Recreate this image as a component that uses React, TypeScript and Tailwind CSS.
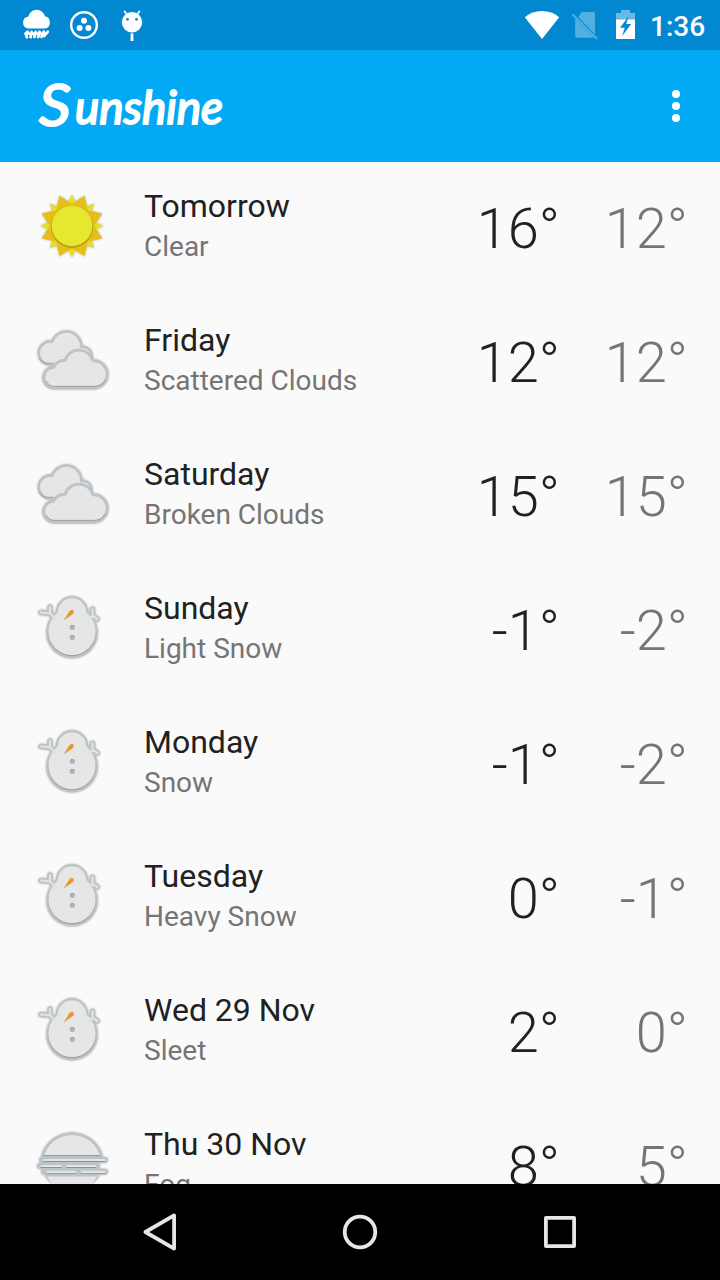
import type { ReactNode } from "react";

type Kind = "clear" | "clouds" | "snow" | "fog";

interface Day {
  name: string;
  summary: string;
  high: number;
  low: number;
  kind: Kind;
}

const days: Day[] = [
  { name: "Tomorrow", summary: "Clear", high: 16, low: 12, kind: "clear" },
  { name: "Friday", summary: "Scattered Clouds", high: 12, low: 12, kind: "clouds" },
  { name: "Saturday", summary: "Broken Clouds", high: 15, low: 15, kind: "clouds" },
  { name: "Sunday", summary: "Light Snow", high: -1, low: -2, kind: "snow" },
  { name: "Monday", summary: "Snow", high: -1, low: -2, kind: "snow" },
  { name: "Tuesday", summary: "Heavy Snow", high: 0, low: -1, kind: "snow" },
  { name: "Wed 29 Nov", summary: "Sleet", high: 2, low: 0, kind: "snow" },
  { name: "Thu 30 Nov", summary: "Fog", high: 8, low: 5, kind: "fog" },
];

const OUTLINE = "#bcc4c8";
const PAPER = "#e6e6e6";

function star(points: number, outer: number, inner: number, offset: number) {
  const out: string[] = [];
  for (let i = 0; i < points * 2; i++) {
    const r = i % 2 === 0 ? outer : inner;
    const a = ((offset + (i * 180) / points) * Math.PI) / 180;
    out.push(`${(36 + r * Math.cos(a)).toFixed(2)},${(36 + r * Math.sin(a)).toFixed(2)}`);
  }
  return out.join(" ");
}

function IconFrame({ children }: { children: ReactNode }) {
  return (
    <svg
      className="h-[72px] w-[72px] shrink-0 overflow-visible drop-shadow-[0_0.5px_0.8px_rgba(0,0,0,0.28)]"
      viewBox="0 0 72 72"
      fill="none"
      strokeLinecap="round"
      strokeLinejoin="round"
    >
      {children}
    </svg>
  );
}

function SunIcon() {
  return (
    <IconFrame>
      <polygon points={star(8, 31.5, 18.5, 0)} fill="#e3e02c" />
      <polygon points={star(8, 32.8, 22.4, 22.5)} fill="#e6bf1b" />
      <circle cx="36" cy="36.8" r="20.9" fill="#a98a12" />
      <circle cx="36" cy="35.8" r="20.9" fill="#c9b41d" />
      <circle cx="36" cy="35.8" r="20.2" fill="#e6e72f" />
    </IconFrame>
  );
}

function CloudsIcon() {
  const back =
    "M12.5 40.5 A11 11 0 1 1 16.3 17.6 A14.9 14.9 0 0 1 45.3 23 A8.6 8.6 0 0 1 55.5 32 L50 41 Z";
  const front =
    "M18.5 64 H58.2 A13.6 13.6 0 0 0 57 36.8 A14.6 14.6 0 0 0 29 36.3 A12.5 12.5 0 0 0 17.6 43.2 A10.4 10.4 0 0 0 18.5 64 Z";
  return (
    <IconFrame>
      <path d={back} fill={PAPER} stroke={OUTLINE} strokeWidth="2.6" />
      <path d="M3.2 34.5 A10 10 0 0 0 13 39.3 H17" stroke="#969b9e" strokeWidth="0.9" />
      <path d={front} fill={PAPER} stroke={OUTLINE} strokeWidth="3" />
      <path d="M10.4 57.5 Q13 62.4 18.5 62.4 H58 Q66 62.2 69.3 56" stroke="#96999b" strokeWidth="0.9" />
    </IconFrame>
  );
}

function SnowIcon() {
  const arms = "M4.9 20.5 L14 21.3 L20.5 28 M14 21 V15 M51.8 28.4 L56.5 23.6 V17.3 M56.5 23.6 L61.3 27";
  return (
    <IconFrame>
      <path d={arms} stroke={OUTLINE} strokeWidth="5.6" />
      <circle cx="36" cy="20.5" r="16.4" fill={OUTLINE} />
      <circle cx="36" cy="40.5" r="26" fill={OUTLINE} />
      <circle cx="36" cy="40.3" r="23.9" fill="#96999b" />
      <circle cx="36" cy="20.5" r="14.2" fill={PAPER} />
      <circle cx="36" cy="39.5" r="23.7" fill={PAPER} />
      <path d={arms} stroke="#e0e2e3" strokeWidth="2.2" />
      <path d="M27.6 28.6 L33.4 19.2 Q35.3 16.8 37.2 18.2 Q38.6 20 37 22 Z" fill="#e9982b" />
      <circle cx="36.3" cy="35.5" r="2.5" fill="#aeb5b9" />
      <circle cx="36.3" cy="45.5" r="2.5" fill="#aeb5b9" />
      <path
        d="M34.3 34.3 A2.5 2.5 0 0 1 38.3 34.3 M34.3 44.3 A2.5 2.5 0 0 1 38.3 44.3"
        stroke="#878d91"
        strokeWidth="0.7"
      />
    </IconFrame>
  );
}

function FogIcon() {
  const bars = "M7.2 32 H69 M4.5 38 H25.5 M30.5 38 H60 M10.5 43.8 H40 M44.8 43.8 H69";
  return (
    <IconFrame>
      <path d="M6.4 28.4 A30.6 30.6 0 0 1 65.6 28.4 Z" fill={PAPER} stroke={OUTLINE} strokeWidth="2.8" />
      <path d="M11 49 H61 A31 31 0 0 1 11 49 Z" fill={PAPER} stroke={OUTLINE} strokeWidth="2.6" />
      <path d="M6 32 H69 M4 38 H61 M8 43.8 H69 M12 47 H60" stroke={OUTLINE} strokeWidth="6" />
      <path d="M8 27.7 H64" stroke="#8f9294" strokeWidth="0.9" />
      <g transform="translate(0 0.9)">
        <path d={bars} stroke="#8f9294" strokeWidth="2.2" strokeLinecap="butt" />
      </g>
      <path d={bars} stroke="#e3e4e5" strokeWidth="2.2" strokeLinecap="butt" />
      <path d="M11 48.6 H61 L56 57 H16 Z" fill={PAPER} />
    </IconFrame>
  );
}

const icons: Record<Kind, () => ReactNode> = {
  clear: SunIcon,
  clouds: CloudsIcon,
  snow: SnowIcon,
  fog: FogIcon,
};

function StatusBar() {
  return (
    <div className="flex h-[50px] shrink-0 items-center justify-between bg-[#0288d1] pr-[17px] pl-3 text-white">
      <div className="flex">
        <svg className="h-[50px] w-12" viewBox="12 0 48 50" fill="#fff">
          <path d="M28 28.6 A6.2 6.2 0 0 1 28.4 16.4 A8.4 8.4 0 0 1 44.8 16.2 A6.3 6.3 0 0 1 44.6 28.6 Z" />
          <path
            d="M27.5 31.8 L25.6 33.6 L27 37.3 M31.5 31.8 L30.6 37.2 M35.6 31.8 L34.4 37 M39.6 31.8 L38.2 37 M43.8 31.6 L41.4 36.8 M47.8 31.8 L44 36 M26 33.6 H44"
            fill="none"
            stroke="#fff"
            strokeWidth="2.8"
            strokeLinecap="round"
          />
        </svg>
        <svg className="h-[50px] w-12" viewBox="60 0 48 50" fill="#fff">
          <circle cx="84" cy="25" r="12.8" fill="none" stroke="#fff" strokeWidth="2.4" />
          <circle cx="84" cy="20.8" r="3" />
          <circle cx="79.6" cy="28" r="3" />
          <circle cx="88.4" cy="28" r="3" />
        </svg>
        <svg className="h-[50px] w-12" viewBox="108 0 48 50" fill="#fff">
          <circle cx="132" cy="22.2" r="10.2" />
          <path d="M124.2 10.8 L127.2 15 M139.8 10.8 L136.8 15" stroke="#fff" strokeWidth="1.8" />
          <path d="M130.6 33.4 H133.4 V41 H130.6 Z" />
          <circle cx="127.5" cy="19.3" r="1.4" fill="#0288d1" />
          <circle cx="136.5" cy="19.3" r="1.4" fill="#0288d1" />
        </svg>
      </div>
      <div className="flex items-center">
        <svg className="h-[50px] w-[46px]" viewBox="520 0 46 50" fill="#fff">
          <path d="M542 39 L524.8 17.3 Q532 11 542 11 Q552 11 559.2 17.3 Z" />
        </svg>
        <svg className="h-[50px] w-[42px]" viewBox="566 0 42 50">
          <path d="M582 12 H593.5 Q595 12 595 13.5 V34.2 L578.2 17 Z" fill="#53afe0" />
          <path d="M575.2 18.5 L594 37.8 H577 Q575.2 37.8 575.2 36 Z" fill="#53afe0" />
          <path d="M572.5 14.3 L597 39" stroke="#53afe0" strokeWidth="2" />
        </svg>
        <svg className="h-[50px] w-[42px]" viewBox="608 0 42 50">
          <path d="M616 13 H621 V10 H630 V13 H635 V20 H616 Z" fill="#67b8e3" />
          <path d="M616 19.5 H635 V39 H616 Z" fill="#fff" />
          <path d="M628.6 16.2 L620 27.8 H624.8 L622 36.2 L631.2 24 H626.2 Z" fill="#0288d1" />
        </svg>
        <span className="w-[53px] pt-1 text-right text-[28px] leading-[46px] font-medium">1:36</span>
      </div>
    </div>
  );
}

function AppBar() {
  return (
    <header className="flex h-28 shrink-0 items-center justify-between bg-[#03a9f4] pr-8 pl-9">
      <h1 className="h-full">
        <svg className="h-28 w-[196px]" viewBox="36 50 196 112">
          <text
            fill="#fff"
            stroke="#fff"
            strokeWidth="2"
            strokeLinejoin="round"
            strokeLinecap="round"
            className="font-['Lato',sans-serif] font-normal italic"
          >
            <tspan x="39" y="126" fontSize="59" textLength="32" lengthAdjust="spacingAndGlyphs">S</tspan>
            <tspan x="75" y="123.5" fontSize="47" textLength="148" lengthAdjust="spacingAndGlyphs">unshine</tspan>
          </text>
        </svg>
      </h1>
      <button className="flex w-6 flex-col items-center gap-1" aria-label="More options">
        <span className="h-2 w-2 rounded-full bg-white" />
        <span className="h-2 w-2 rounded-full bg-white" />
        <span className="h-2 w-2 rounded-full bg-white" />
      </button>
    </header>
  );
}

function DayRow({ day }: { day: Day }) {
  const Icon = icons[day.kind];
  return (
    <li className="flex h-[134px] shrink-0 pr-8 pl-9">
      <div className="pt-7">
        <Icon />
      </div>
      <div className="flex grow flex-col pt-[25px] pl-9">
        <span className="text-[32px] leading-[38px] text-[#212121]">{day.name}</span>
        <span className="pt-[5px] text-[28px] leading-[33px] text-[#757575]">{day.summary}</span>
      </div>
      <span className="w-32 pt-[34px] text-right text-[56px] leading-[66px] font-light text-[#212121]">
        {day.high}°
      </span>
      <span className="w-32 pt-[34px] text-right text-[56px] leading-[66px] font-light text-[#757575]">
        {day.low}°
      </span>
    </li>
  );
}

function NavBar() {
  return (
    <nav className="flex h-24 shrink-0 items-center justify-center bg-black">
      <svg className="h-24 w-[200px]" viewBox="60 1184 200 96" fill="none" stroke="#e6e6e6" strokeWidth="3.8" strokeLinejoin="round">
        <path d="M145.4 1232 L174.1 1215.4 V1248.6 Z" />
      </svg>
      <svg className="h-24 w-[200px]" viewBox="260 1184 200 96" fill="none" stroke="#e6e6e6" strokeWidth="3.8">
        <circle cx="360" cy="1232" r="15.3" />
      </svg>
      <svg className="h-24 w-[200px]" viewBox="460 1184 200 96" fill="none" stroke="#e6e6e6" strokeWidth="3.8" strokeLinejoin="round">
        <rect x="545.9" y="1217.9" width="28.2" height="28.2" />
      </svg>
    </nav>
  );
}

export default function App() {
  return (
    <div className="flex h-[1280px] w-[720px] flex-col overflow-hidden bg-[#fafafa] font-['Roboto',sans-serif]">
      <StatusBar />
      <AppBar />
      <ul className="flex min-h-0 grow flex-col overflow-hidden">
        {days.map((day) => (
          <DayRow key={day.name} day={day} />
        ))}
      </ul>
      <NavBar />
    </div>
  );
}
